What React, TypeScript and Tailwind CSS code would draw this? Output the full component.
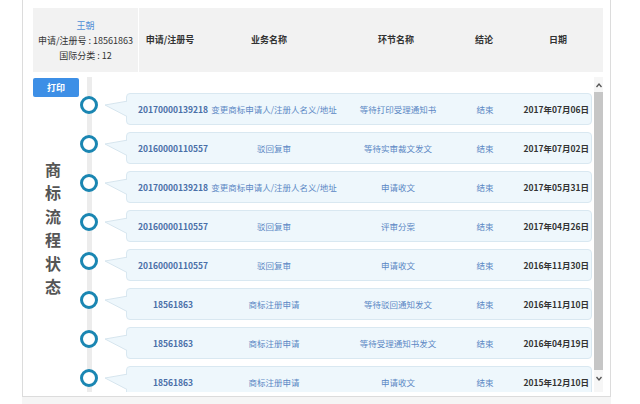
import React from "react";

const rows = [
  ["20170000139218", "变更商标申请人/注册人名义/地址", "等待打印受理通知书", "结束", "2017年07月06日"],
  ["20160000110557", "驳回复审", "等待实审裁文发文", "结束", "2017年07月02日"],
  ["20170000139218", "变更商标申请人/注册人名义/地址", "申请收文", "结束", "2017年05月31日"],
  ["20160000110557", "驳回复审", "评审分案", "结束", "2017年04月26日"],
  ["20160000110557", "驳回复审", "申请收文", "结束", "2016年11月30日"],
  ["18561863", "商标注册申请", "等待驳回通知发文", "结束", "2016年11月10日"],
  ["18561863", "商标注册申请", "等待受理通知书发文", "结束", "2016年04月19日"],
  ["18561863", "商标注册申请", "申请收文", "结束", "2015年12月10日"],
];

function Row({ r }: { r: string[] }) {
  return (
    <div className="flex h-[32px] shrink-0">
      <div className="w-[32px] flex justify-center pt-[3px]">
        <div className="w-[18px] h-[18px] rounded-full border-[3px] border-[#1a86b2] bg-white relative z-10" />
      </div>
      <svg width="22" height="32" viewBox="0 0 22 32" className="relative z-10 -mr-[1px]">
        <polygon points="0,12 23,8 23,24" fill="#eef7fc" />
        <polyline points="23,8 0,12 23,24" fill="none" stroke="#d6e5ee" strokeWidth="1" />
      </svg>
      <div className="w-[466px] h-[32px] bg-[#eef7fc] border border-[#d9e8f1] rounded-[4px] flex items-center text-[8.5px] whitespace-nowrap">
        <div className="w-[92px] flex justify-center font-semibold text-[#4a6fa8]">{r[0]}</div>
        <div className="w-[110px] flex justify-center text-[#5b87c4]">{r[1]}</div>
        <div className="w-[138px] flex justify-center text-[#5b87c4]">{r[2]}</div>
        <div className="w-[36px] flex justify-center text-[#5b87c4]">{r[3]}</div>
        <div className="w-[88px] flex justify-end pr-[2px] font-bold text-[#333]">{r[4]}</div>
      </div>
    </div>
  );
}

export default function App() {
  return (
    <div className="w-[640px] h-[404px] bg-white overflow-hidden font-['Noto_Sans_CJK_SC','Noto_Sans',sans-serif]">
      <div className="ml-[22px] w-[589px] h-[397px] border-l border-r border-b border-[#dcdcdc] pl-[10px] pt-[8px] flex flex-col">
        {/* header */}
        <div className="flex h-[64px] w-[570px] bg-[#f2f2f2] shrink-0">
          <div className="w-[106px] border-r border-white flex flex-col items-center justify-center text-[9px] leading-[15px] text-[#333]">
            <div className="text-[#4f8ed6]">王朝</div>
            <div>申请/注册号 : 18561863</div>
            <div>国际分类 : 12</div>
          </div>
          <div className="flex items-center text-[9px] font-bold text-[#333] whitespace-nowrap">
            <div className="w-[62px] flex justify-center">申请/注册号</div>
            <div className="w-[136px] flex justify-center">业务名称</div>
            <div className="w-[118px] flex justify-center">环节名称</div>
            <div className="w-[58px] flex justify-center">结论</div>
            <div className="w-[90px] flex justify-center">日期</div>
          </div>
        </div>
        {/* body */}
        <div className="flex h-[324px]">
          <div className="w-[40px] flex flex-col items-start shrink-0">
            <div className="mt-[6px] w-[46px] h-[19px] shrink-0 bg-[#3d8fe6] rounded-[2px] text-white text-[9px] font-bold flex items-center justify-center relative z-20">
              打印
            </div>
            <div className="mt-[61px] w-[40px] flex flex-col items-center text-[16px] leading-[23.4px] font-bold text-[#555]">
              <span>商</span>
              <span>标</span>
              <span>流</span>
              <span>程</span>
              <span>状</span>
              <span>态</span>
            </div>
          </div>
          <div className="flex mt-[5px] h-[315px]">
            <div className="w-[521px] h-[315px] overflow-hidden relative pt-[16px] flex flex-col gap-[7px]">
              <div className="absolute left-[14px] top-0 bottom-0 w-[5px] bg-[#ececec]" />
              {rows.map((r, i) => (
                <Row key={i} r={r} />
              ))}
            </div>
            <div className="w-[9px] h-[315px] bg-[#f6f6f6] flex flex-col items-center">
              <svg width="8" height="14" viewBox="0 0 8 14" className="mt-[1px] shrink-0">
                <polyline points="1.5,9 4,6 6.5,9" fill="none" stroke="#555" strokeWidth="1.3" />
              </svg>
              <div className="w-[9px] h-[278px] bg-[#c6c6c6] shrink-0" />
              <div className="flex-1" />
              <svg width="8" height="14" viewBox="0 0 8 14" className="mb-[6px] shrink-0">
                <polyline points="1.5,5 4,8 6.5,5" fill="none" stroke="#555" strokeWidth="1.3" />
              </svg>
            </div>
          </div>
        </div>
      </div>
      <div className="ml-[22px] w-[589px] h-[7px] bg-[#f5f5f5]" />
    </div>
  );
}
